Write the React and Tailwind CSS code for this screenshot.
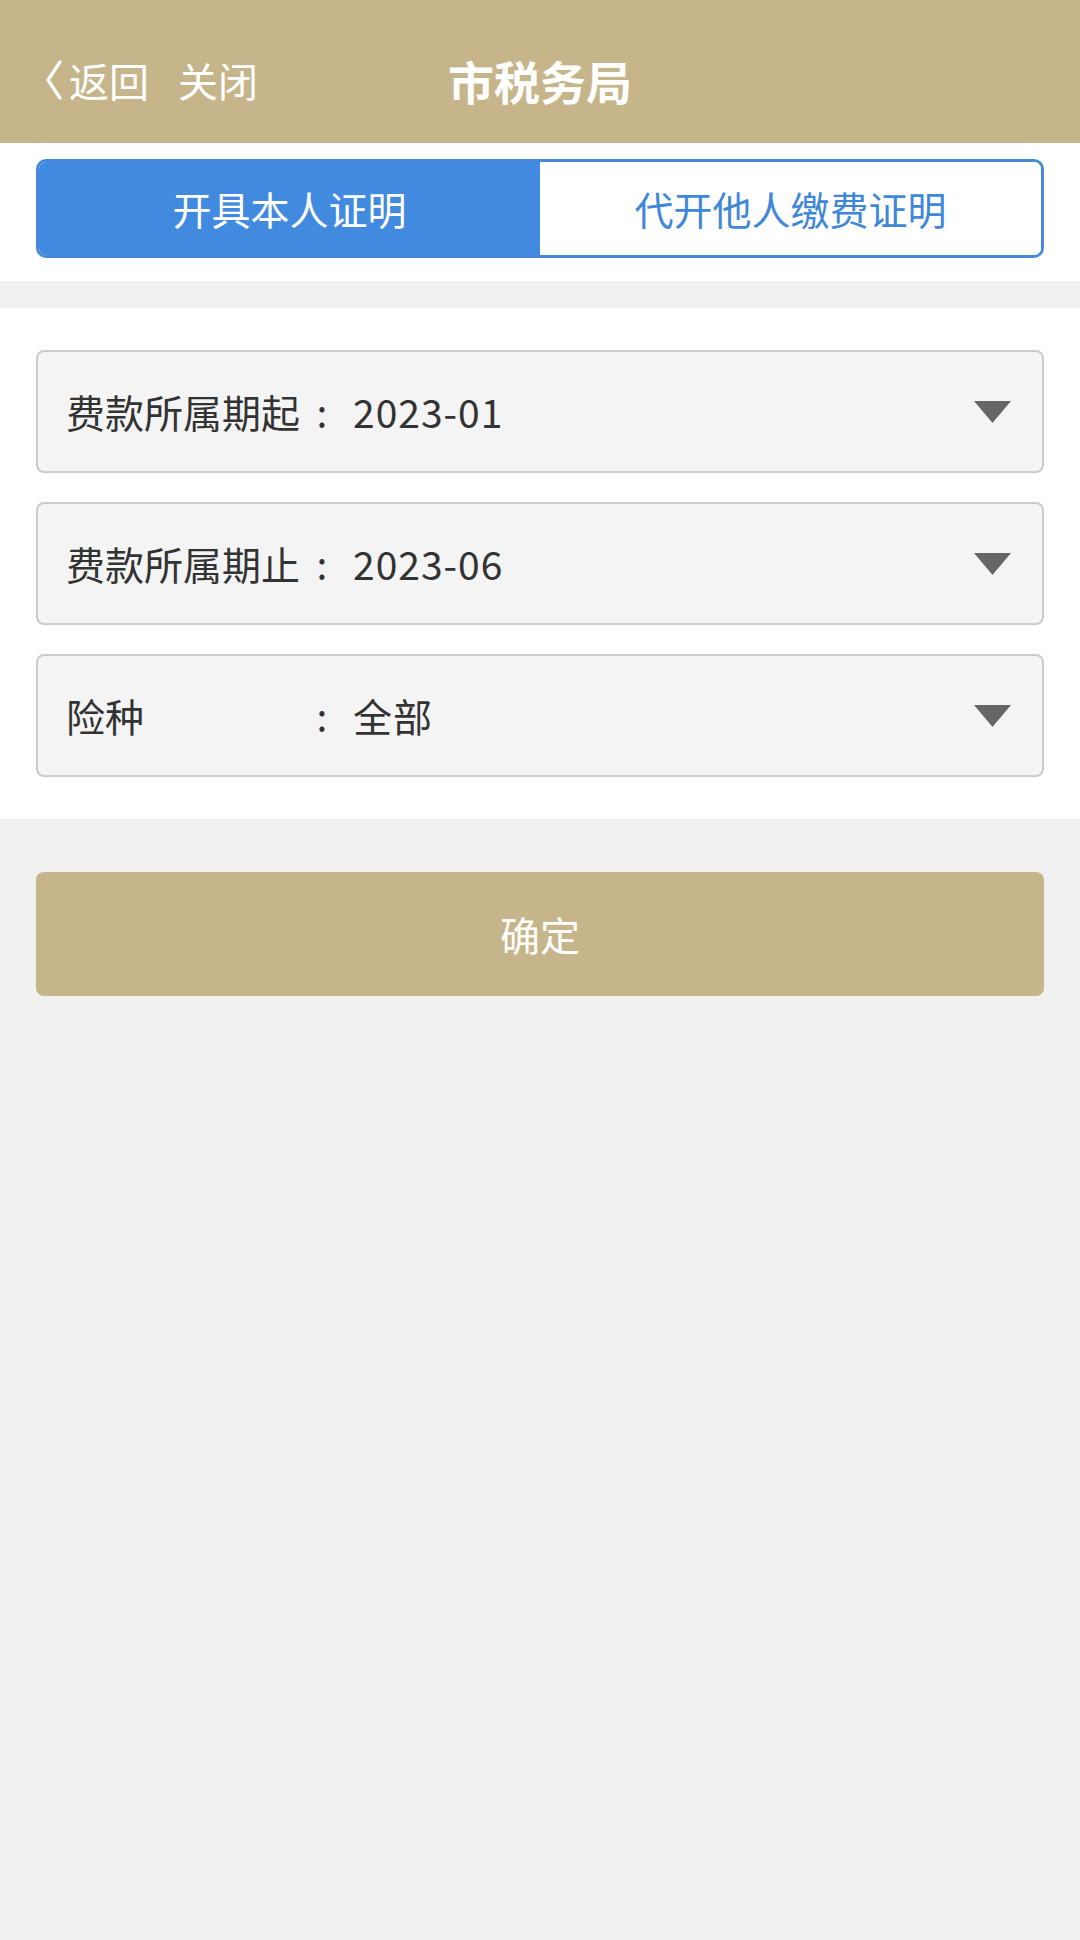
import React from "react";

const font = { fontFamily: '"Noto Sans CJK SC", "Noto Sans", sans-serif' };

function Select({ label, value }) {
  return (
    <div className="h-[123px] bg-[#f4f4f4] border-2 border-[#cccccc] rounded-[8px] flex items-center pl-[28px] pr-[31px] text-[39px] text-[#333333]">
      <span className="w-[234px] whitespace-nowrap">{label}</span>
      <span className="w-[44px] text-center">:</span>
      <span className="pl-[9px] flex-1 tracking-[1px]">{value}</span>
      <svg width="37" height="22" viewBox="0 0 37 22" className="shrink-0">
        <polygon points="0,0 37,0 18.5,22" fill="#666666" />
      </svg>
    </div>
  );
}

export default function App() {
  return (
    <div className="min-h-[1940px] w-[1080px] bg-[#f0f0f0]" style={font}>
      {/* Header */}
      <div className="h-[143px] bg-[#c6b58a] grid grid-cols-[1fr_auto_1fr] items-center pt-[16px] text-white">
        <div className="flex items-center pl-[45px]">
          <svg width="17" height="40" viewBox="0 0 17 40" className="shrink-0">
            <polyline points="15,2 3,20 15,38" fill="none" stroke="#ffffff" strokeWidth="3.2" strokeLinejoin="round" strokeLinecap="round" />
          </svg>
          <span className="text-[40px] ml-[7px] leading-none">返回</span>
          <span className="text-[40px] ml-[29px] leading-none">关闭</span>
        </div>
        <div className="text-[46px] font-bold leading-none">市税务局</div>
        <div></div>
      </div>

      {/* Segmented */}
      <div className="bg-white pt-[16px] pb-[23px] px-[36px]">
        <div className="h-[99px] flex rounded-[10px] border-[3px] border-[#4688dc] overflow-hidden">
          <div className="flex-1 bg-[#418ae0] flex items-center justify-center text-white text-[39px]">开具本人证明</div>
          <div className="flex-1 bg-white flex items-center justify-center text-[#3f87d9] text-[39px]">代开他人缴费证明</div>
        </div>
      </div>

      <div className="h-[27px] bg-[#f0f0f0]"></div>

      {/* Form */}
      <div className="bg-white py-[42px] px-[36px] flex flex-col gap-[29px]">
        <Select label="费款所属期起" value="2023-01" />
        <Select label="费款所属期止" value="2023-06" />
        <Select label="险种" value="全部" />
      </div>

      {/* Button */}
      <div className="px-[36px] pt-[53px]">
        <div className="h-[124px] bg-[#c6b58a] rounded-[8px] flex items-center justify-center text-white text-[40px]">确定</div>
      </div>
    </div>
  );
}
